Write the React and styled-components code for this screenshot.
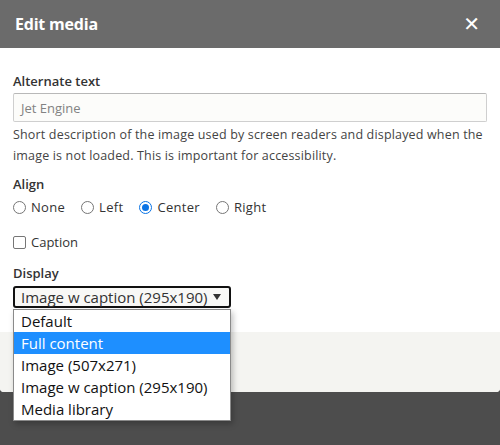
import React from 'react'
import styled, { createGlobalStyle } from 'styled-components'

const GlobalStyle = createGlobalStyle`
  html, body {
    margin: 0;
    padding: 0;
    background: #4d4d4d;
    font-family: "Open Sans", "DejaVu Sans", sans-serif;
    color: #222;
  }
`

const Page = styled.div`
  min-height: 445px;
  background: #4d4d4d;
  position: relative;
`

const Dialog = styled.div`
  width: 500px;
  background: #fff;
  border-radius: 0 0 4px 4px;
`

const TitleBar = styled.div`
  height: 48px;
  background: #6b6b6b;
  display: flex;
  align-items: center;
  justify-content: space-between;
  padding: 0 20px 0 15px;
  box-sizing: border-box;
  color: #fff;
`

const Title = styled.h1`
  margin: 0;
  font-size: 16px;
  font-weight: 700;
  letter-spacing: -0.2px;
`

const Close = styled.span`
  font-size: 20px;
  font-weight: 700;
  line-height: 1;
`

const Body = styled.div`
  padding: 24px 13px 0;
  height: 284px;
  box-sizing: border-box;
`

const Field = styled.div`
  margin-bottom: ${p => p.$gap || 0}px;
`

const Label = styled.div`
  font-size: 13px;
  font-weight: 600;
  line-height: 18px;
  margin-bottom: ${p => p.$mb ?? 3}px;
  color: #333;
`

const TextInput = styled.div`
  height: 29px;
  box-sizing: border-box;
  border: 1px solid #cfcfcf;
  border-top-color: #b8b8b8;
  border-radius: 2px;
  background: #fcfcfa;
  color: #828282;
  font-size: 13px;
  display: flex;
  align-items: center;
  padding: 0 7px;
`

const Description = styled.p`
  margin: 2px 0 0;
  font-size: 12.5px;
  line-height: 21px;
  color: #444;
  letter-spacing: 0.17px;
`

const Options = styled.div`
  display: flex;
  gap: 16px;
  letter-spacing: 0.3px;
`

const Option = styled.label`
  display: flex;
  align-items: center;
  gap: 5px;
  height: 18px;
  font-size: 13px;
  color: #333;
`

const Radio = styled.span`
  width: 13px;
  height: 13px;
  border-radius: 50%;
  border: 1px solid ${p => (p.$checked ? '#0b74e5' : '#767676')};
  box-sizing: border-box;
  display: flex;
  align-items: center;
  justify-content: center;
  background: #fff;
  &::after {
    content: '';
    display: ${p => (p.$checked ? 'block' : 'none')};
    width: 7px;
    height: 7px;
    border-radius: 50%;
    background: #0b74e5;
  }
`

const Check = styled.span`
  width: 13px;
  height: 13px;
  border: 1px solid #767676;
  border-radius: 2px;
  box-sizing: border-box;
  background: #fff;
`

const SelectWrap = styled.div`
  position: relative;
  width: 218px;
`

const Select = styled.div`
  height: 22px;
  box-sizing: border-box;
  border: 2px solid #111;
  border-radius: 3px;
  background: #f8f8f6;
  color: #333;
  font-size: 15px;
  display: flex;
  align-items: center;
  justify-content: space-between;
  padding: 0 8px 0 6px;
`

const Arrow = styled.span`
  width: 0;
  height: 0;
  border-left: 4px solid transparent;
  border-right: 4px solid transparent;
  border-top: 6px solid #333;
`

const Menu = styled.ul`
  position: absolute;
  top: 23px;
  left: 0;
  width: 218px;
  box-sizing: border-box;
  margin: 0;
  padding: 0;
  list-style: none;
  background: #fff;
  border: 1px solid #8a8a8a;
  box-shadow: 2px 3px 6px rgba(0, 0, 0, 0.25);
  z-index: 2;
`

const Item = styled.li`
  height: 22px;
  line-height: 22px;
  padding: 0 7px;
  font-size: 15px;
  color: ${p => (p.$active ? '#fff' : '#111')};
  background: ${p => (p.$active ? '#1e8fff' : 'transparent')};
`

const Footer = styled.div`
  height: 60px;
  background: #f4f4f1;
  border-radius: 0 0 4px 4px;
`

const items = ['Default', 'Full content', 'Image (507x271)', 'Image w caption (295x190)', 'Media library']

export default function App() {
  return (
    <Page>
      <GlobalStyle />
      <Dialog>
        <TitleBar>
          <Title>Edit media</Title>
          <Close>✕</Close>
        </TitleBar>
        <Body>
          <Field $gap={9}>
            <Label>Alternate text</Label>
            <TextInput>Jet Engine</TextInput>
            <Description>
              Short description of the image used by screen readers and displayed when the image is not loaded. This is important for accessibility.
            </Description>
          </Field>
          <Field $gap={17}>
            <Label $mb={5}>Align</Label>
            <Options>
              {['None', 'Left', 'Center', 'Right'].map(o => (
                <Option key={o}>
                  <Radio $checked={o === 'Center'} />
                  {o}
                </Option>
              ))}
            </Options>
          </Field>
          <Field $gap={13}>
            <Option>
              <Check />
              Caption
            </Option>
          </Field>
          <Field>
            <Label $mb={4}>Display</Label>
            <SelectWrap>
              <Select>
                Image w caption (295x190)
                <Arrow />
              </Select>
              <Menu>
                {items.map(i => (
                  <Item key={i} $active={i === 'Full content'}>{i}</Item>
                ))}
              </Menu>
            </SelectWrap>
          </Field>
        </Body>
        <Footer />
      </Dialog>
    </Page>
  )
}
